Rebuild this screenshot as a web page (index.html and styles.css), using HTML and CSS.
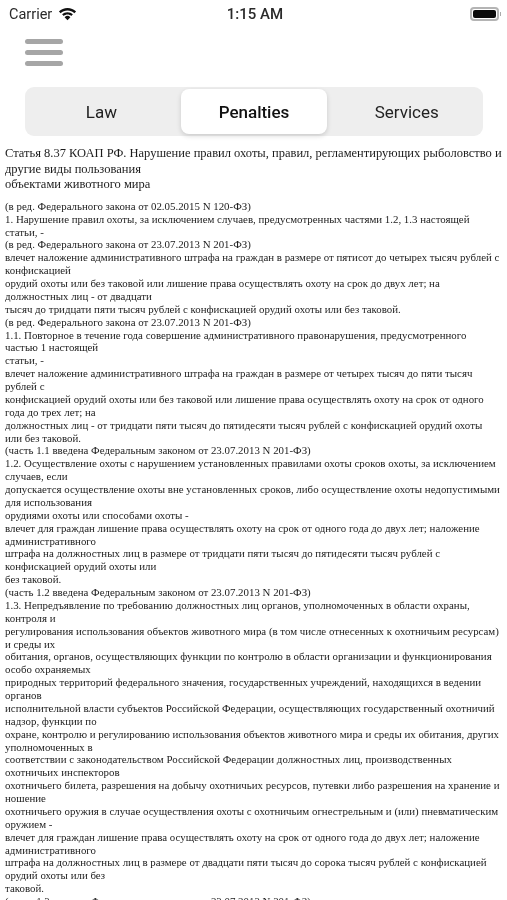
FILE: index.html
```html
<!DOCTYPE html>
<html lang="ru">
<head>
<meta charset="utf-8">
<title>Penalties</title>
<link rel="stylesheet" href="styles.css">
</head>
<body>
<div class="screen">
  <header class="status">
    <div class="status-left">
      <span>Carrier</span>
      <svg class="wifi" viewBox="0 0 20 15" aria-hidden="true"><path d="M10 14.2 6.9 10.9a4.6 4.6 0 0 1 6.2 0z"/><path d="M10 1C6.4 1 3.2 2.400 .8 4.700l1.900 2C4.600 4.900 7.200 3.800 10 3.800s5.400 1.100 7.300 2.900l1.900-2C16.800 2.400 13.600 1 10 1z"/><path d="M10 5.500c-2.200 0-4.300.9-5.800 2.300l1.800 1.900c1-1 2.500-1.600 4-1.600s3 .6 4 1.600l1.800-1.900C14.300 6.400 12.200 5.500 10 5.500z"/></svg>
    </div>
    <div class="status-time">1:15 AM</div>
    <div class="status-right">
      <span class="battery"><span class="battery-fill"></span></span><span class="battery-cap"></span>
    </div>
  </header>
  <div class="menu" aria-label="Menu"><span></span><span></span><span></span></div>
  <nav class="tabs">
    <div class="tab">Law</div>
    <div class="tab active">Penalties</div>
    <div class="tab">Services</div>
  </nav>
  <main class="doc">
    <h1 class="title">Статья 8.37 КОАП РФ. Нарушение правил охоты, правил, регламентирующих рыболовство и<br>другие виды пользования<br>объектами животного мира</h1>
    <p class="body">(в ред. Федерального закона от 02.05.2015 N 120-ФЗ)<br>
1. Нарушение правил охоты, за исключением случаев, предусмотренных частями 1.2, 1.3 настоящей<br>
статьи, -<br>
(в ред. Федерального закона от 23.07.2013 N 201-ФЗ)<br>
влечет наложение административного штрафа на граждан в размере от пятисот до четырех тысяч рублей с<br>
конфискацией<br>
орудий охоты или без таковой или лишение права осуществлять охоту на срок до двух лет; на<br>
должностных лиц - от двадцати<br>
тысяч до тридцати пяти тысяч рублей с конфискацией орудий охоты или без таковой.<br>
(в ред. Федерального закона от 23.07.2013 N 201-ФЗ)<br>
1.1. Повторное в течение года совершение административного правонарушения, предусмотренного<br>
частью 1 настоящей<br>
статьи, -<br>
влечет наложение административного штрафа на граждан в размере от четырех тысяч до пяти тысяч<br>
рублей с<br>
конфискацией орудий охоты или без таковой или лишение права осуществлять охоту на срок от одного<br>
года до трех лет; на<br>
должностных лиц - от тридцати пяти тысяч до пятидесяти тысяч рублей с конфискацией орудий охоты<br>
или без таковой.<br>
(часть 1.1 введена Федеральным законом от 23.07.2013 N 201-ФЗ)<br>
1.2. Осуществление охоты с нарушением установленных правилами охоты сроков охоты, за исключением<br>
случаев, если<br>
допускается осуществление охоты вне установленных сроков, либо осуществление охоты недопустимыми<br>
для использования<br>
орудиями охоты или способами охоты -<br>
влечет для граждан лишение права осуществлять охоту на срок от одного года до двух лет; наложение<br>
административного<br>
штрафа на должностных лиц в размере от тридцати пяти тысяч до пятидесяти тысяч рублей с<br>
конфискацией орудий охоты или<br>
без таковой.<br>
(часть 1.2 введена Федеральным законом от 23.07.2013 N 201-ФЗ)<br>
1.3. Непредъявление по требованию должностных лиц органов, уполномоченных в области охраны,<br>
контроля и<br>
регулирования использования объектов животного мира (в том числе отнесенных к охотничьим ресурсам)<br>
и среды их<br>
обитания, органов, осуществляющих функции по контролю в области организации и функционирования<br>
особо охраняемых<br>
природных территорий федерального значения, государственных учреждений, находящихся в ведении<br>
органов<br>
исполнительной власти субъектов Российской Федерации, осуществляющих государственный охотничий<br>
надзор, функции по<br>
охране, контролю и регулированию использования объектов животного мира и среды их обитания, других<br>
уполномоченных в<br>
соответствии с законодательством Российской Федерации должностных лиц, производственных<br>
охотничьих инспекторов<br>
охотничьего билета, разрешения на добычу охотничьих ресурсов, путевки либо разрешения на хранение и<br>
ношение<br>
охотничьего оружия в случае осуществления охоты с охотничьим огнестрельным и (или) пневматическим<br>
оружием -<br>
влечет для граждан лишение права осуществлять охоту на срок от одного года до двух лет; наложение<br>
административного<br>
штрафа на должностных лиц в размере от двадцати пяти тысяч до сорока тысяч рублей с конфискацией<br>
орудий охоты или без<br>
таковой.<br>
(часть 1.3 введена Федеральным законом от 23.07.2013 N 201-ФЗ)</p>
  </main>
</div>
</body>
</html>
```
FILE: styles.css
```css
html, body {
  margin: 0;
  padding: 0;
  background: #fff;
}
.screen {
  width: 507px;
  height: 900px;
  overflow: hidden;
  font-family: "Roboto", "Liberation Sans", sans-serif;
  color: #222;
  filter: blur(.35px);
}
.status {
  height: 28px;
  display: grid;
  grid-template-columns: 1fr auto 1fr;
  align-items: center;
  padding: 0 6px 0 9px;
  font-size: 14.500px;
  color: #2a2a2a;
}
.status-left {
  display: flex;
  align-items: center;
  gap: 6px;
}
.wifi {
  width: 19px;
  height: 14px;
  fill: #111;
}
.status-time {
  font-weight: 500;
  font-size: 15px;
}
.status-right {
  display: flex;
  align-items: center;
  justify-content: flex-end;
}
.battery {
  width: 29px;
  height: 14px;
  box-sizing: border-box;
  border: 2px solid #b4b4b4;
  border-radius: 4px;
  padding: 1px;
  display: flex;
}
.battery-fill {
  flex: 1;
  background: #0a0a0a;
  border-radius: 2px;
}
.battery-cap {
  width: 1.500px;
  height: 4px;
  background: #aaa;
  margin-left: .5px;
}
.menu {
  margin: 11px 0 0 25px;
  width: 38px;
  display: flex;
  flex-direction: column;
  gap: 6px;
}
.menu span {
  height: 5px;
  border-radius: 2.500px;
  background: #a6a6a6;
}
.tabs {
  margin: 21px 0 0 25px;
  width: 458px;
  height: 49px;
  box-sizing: border-box;
  background: #eeeeee;
  border-radius: 9px;
  padding: 2px 0 2px;
  display: grid;
  grid-template-columns: repeat(3, 1fr);
}
.tab {
  display: flex;
  align-items: center;
  justify-content: center;
  font-size: 17px;
  color: #222;
  border-radius: 8px;
}
.tab.active {
  margin: 0 3px;
  background: #fff;
  font-weight: 500;
  color: #111;
  box-shadow: 0 2px 5px rgba(0, 0, 0, .15);
}
.doc {
  padding: 10px 0 0 5px;
  font-family: "Liberation Serif", serif;
  color: #1c1c1c;
  white-space: nowrap;
}
.title {
  margin: 0;
  font-size: 12.500px;
  font-weight: 400;
  line-height: 15.600px;
}
.body {
  margin: 7px 0 0;
  font-size: 10.880px;
  line-height: 12.880px;
}
```
